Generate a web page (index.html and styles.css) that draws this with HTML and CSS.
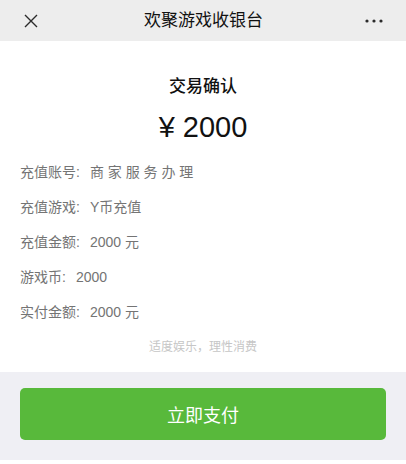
FILE: index.html
```html
<!DOCTYPE html>
<html lang="zh-CN">
<head>
<meta charset="utf-8">
<title>欢聚游戏收银台</title>
<link rel="stylesheet" href="styles.css">
</head>
<body>
<header class="topbar">
  <svg class="icon-close" width="14" height="14" viewBox="0 0 14 14"><path d="M1 1L13 13M13 1L1 13" stroke="#2b2b2b" stroke-width="1.4" fill="none"/></svg>
  <div class="topbar-title">欢聚游戏收银台</div>
  <svg class="icon-more" width="18" height="4" viewBox="0 0 18 4"><circle cx="2" cy="2" r="1.6" fill="#2b2b2b"/><circle cx="9" cy="2" r="1.6" fill="#2b2b2b"/><circle cx="16" cy="2" r="1.6" fill="#2b2b2b"/></svg>
</header>
<main class="content">
  <h1 class="heading">交易确认</h1>
  <div class="amount"><span class="yen">¥</span> 2000</div>
  <ul class="rows">
    <li class="row"><span class="label">充值账号:</span><span class="value">商 家 服 务 办 理</span></li>
    <li class="row"><span class="label">充值游戏:</span><span class="value">Y币充值</span></li>
    <li class="row"><span class="label">充值金额:</span><span class="value">2000 元</span></li>
    <li class="row"><span class="label">游戏币:</span><span class="value">2000</span></li>
    <li class="row"><span class="label">实付金额:</span><span class="value">2000 元</span></li>
  </ul>
  <p class="note">适度娱乐，理性消费</p>
</main>
<footer class="bottombar">
  <button class="pay-btn">立即支付</button>
</footer>
</body>
</html>
```
FILE: styles.css
```css
* { box-sizing: border-box; }
html, body {
  margin: 0;
  padding: 0;
  background: #fff;
  font-family: "Liberation Sans", "Noto Sans CJK SC", sans-serif;
}
.topbar {
  height: 41px;
  background: #ededed;
  display: flex;
  align-items: center;
  justify-content: space-between;
  padding: 0 23px 0 24px;
}
.icon-close { display: block; }
.icon-more { display: block; }
.topbar-title {
  font-size: 17px;
  color: #111;
  line-height: 24px;
  margin-left: 4px;
}
.content {
  padding: 34px 0 15px;
}
.heading {
  margin: 0;
  text-align: center;
  font-size: 17px;
  font-weight: 500;
  line-height: 24px;
  color: #111;
}
.amount {
  margin-top: 10px;
  text-align: center;
  font-size: 29px;
  line-height: 36px;
  color: #111;
}
.rows {
  list-style: none;
  margin: 10px 0 0;
  padding: 0 20px;
}
.row {
  height: 35px;
  line-height: 35px;
  font-size: 14px;
  color: #747474;
  display: flex;
}
.label { margin-right: 10px; }
.note {
  margin: 7px 0 0;
  text-align: center;
  font-size: 12px;
  line-height: 20px;
  color: #c6c6c6;
}
.bottombar {
  height: 88px;
  background: #efeff4;
  padding: 16px 20px 0;
}
.pay-btn {
  display: block;
  width: 100%;
  height: 52px;
  border: 0;
  border-radius: 5px;
  background: #58b93b;
  color: #fff;
  font-family: "Liberation Sans", "Noto Sans CJK SC", sans-serif;
  font-size: 18px;
}
```
